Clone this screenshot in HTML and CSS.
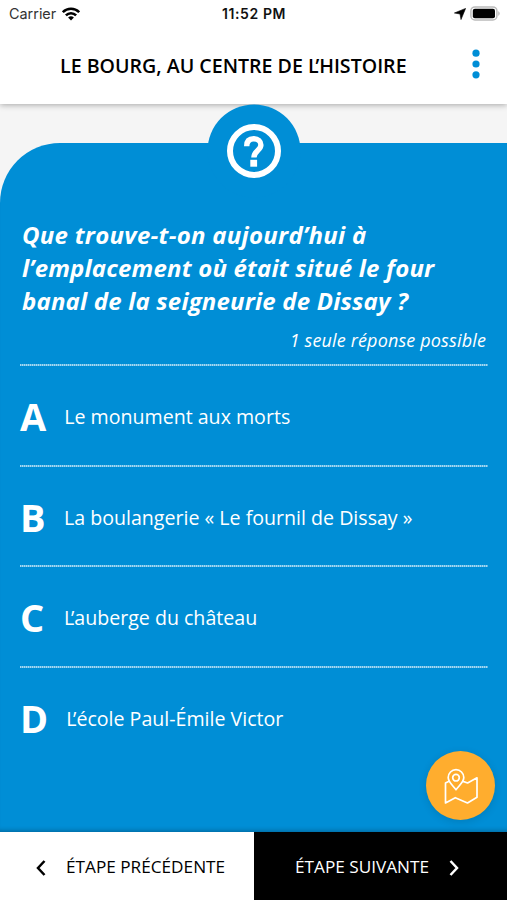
FILE: index.html
```html
<!DOCTYPE html>
<html lang="fr">
<head>
<meta charset="utf-8">
<title>Le Bourg, au centre de l’histoire</title>
<link rel="stylesheet" href="styles.css">
</head>
<body>
<div class="app">
  <header class="header">
    <div class="status">
      <div class="status-left"><span class="carrier">Carrier</span>
        <svg class="wifi" width="18" height="14" viewBox="0 0 18 14"><g fill="none" stroke="#000" stroke-width="2.6"><path d="M.8 5.200a11.600 11.600 0 0 1 16.400 0"/><path d="M3.900 8.400a7.200 7.200 0 0 1 10.200 0"/></g><path d="M9 13.600l-2.900-3a4.100 4.100 0 0 1 5.800 0z"/></svg>
      </div>
      <span class="clock">11:52 PM</span>
      <div class="status-right">
        <svg width="12" height="12" viewBox="0 0 12 12"><path d="M11.600.4L7 11.600 6 6 .4 5z" stroke="#000" stroke-width=".6"/></svg>
        <svg width="31" height="15" viewBox="0 0 31 15"><rect x=".9" y=".9" width="26" height="13" rx="4" fill="#fff" stroke="#bbb" stroke-width="1.5"/><rect x="2.800" y="2.800" width="22.200" height="9.400" rx="2"/><path d="M28.400 5v5q2.400-2.500 0-5z" fill="#aaa"/></svg>
      </div>
    </div>
    <div class="titlebar">
      <h1 class="title">LE BOURG, AU CENTRE DE <span class="kern">L</span>’HISTOIRE</h1>
      <svg class="menu" width="8" height="30" viewBox="0 0 8 30"><circle cx="4" cy="4.200" r="3.600"/><circle cx="4" cy="15" r="3.600"/><circle cx="4" cy="25.800" r="3.600"/></svg>
    </div>
  </header>
  <main class="stage">
    <section class="quiz">
      <div class="badge">
        <svg width="94" height="94" viewBox="0 0 94 94"><circle cx="47" cy="47" r="46.500" fill="#008ed6"/><circle cx="47" cy="47" r="24" fill="none" stroke="#fff" stroke-width="6"/><path d="M39.700 42.200c0-5 2.600-7.400 7-7.400s7.200 2.600 7.200 6.300c0 5.200-7 5.800-7 12.400" fill="none" stroke="#fff" stroke-width="5.400"/><path d="M43.300 55.800h6.800v6.900h-6.800z" fill="#fff"/></svg>
      </div>
      <h2 class="question"><span class="wide">Que trouve-t-on aujourd’hui à</span><br>l’emplacement où était situé le four<br>banal de la seigneurie de Dissay ?</h2>
      <p class="hint">1 seule réponse possible</p>
      <ul class="answers">
        <li class="answer"><b class="letter">A</b><span class="label">Le monument aux morts</span></li>
        <li class="answer"><b class="letter">B</b><span class="label">La boulangerie « Le fournil de Dissay »</span></li>
        <li class="answer"><b class="letter">C</b><span class="label"><span class="kern">L</span>’auberge du château</span></li>
        <li class="answer"><b class="letter">D</b><span class="label"><span class="kern">L</span>’école Paul-Émile Victor</span></li>
      </ul>
    </section>
    <div class="fab">
      <svg width="36" height="36" viewBox="0 0 36 36" fill="none" stroke="#fff" stroke-width="1.700" stroke-linejoin="round" stroke-linecap="round"><path d="M5.500 13.500L2.500 15v20l9.800-5.300L24.500 35l9.500-5.800V9.800l-9.400 5.200-4.600-1.600"/><path d="M13 21.700C9.500 17 5.200 14 5.200 9.500a7.800 7.800 0 0 1 15.600 0c0 4.500-4.300 7.500-7.800 12.200z"/><circle cx="13" cy="9.700" r="3.300"/></svg>
    </div>
  </main>
  <footer class="footer">
    <div class="nav prev"><svg width="10" height="16" viewBox="0 0 10 16"><path d="M8.500 1L2 8l6.500 7"/></svg><span>ÉTAPE PRÉCÉDENTE</span></div>
    <div class="nav next"><span>ÉTAPE SUIVANTE</span><svg width="10" height="16" viewBox="0 0 10 16"><path d="M1.500 1L8 8l-6.500 7"/></svg></div>
  </footer>
</div>
</body>
</html>
```
FILE: styles.css
```css
* { box-sizing: border-box; }
body { margin: 0; font-family: "Open Sans", sans-serif; background: #f5f5f5; }
.app { width: 507px; height: 900px; display: flex; flex-direction: column; overflow: hidden; }
.header { height: 104px; flex: none; background: #fff; box-shadow: 0 1px 6px rgba(0,0,0,.32); display: flex; flex-direction: column; }
.status { height: 27px; display: grid; grid-template-columns: 1fr auto 1fr; align-items: center; padding: 0 6px 0 9px; font-family: Inter, sans-serif; font-size: 14px; color: #111; }
.status-left, .status-right { display: flex; align-items: center; gap: 6px; }
.status-right { justify-content: flex-end; gap: 4px; }
.carrier { color: #333; font-size: 14.400px; }
.clock { font-weight: 600; letter-spacing: .6px; margin-right: 2px; }
.titlebar { flex: 1; display: flex; align-items: flex-start; padding-left: 60px; }
.title { margin: 25px 0 0; width: 412px; font-size: 19.600px; line-height: 28px; font-weight: 600; white-space: nowrap; color: #000; }
.kern { letter-spacing: -3.300px; }
.menu { margin-top: 22px; fill: #008ed6; }
.stage { flex: 1; position: relative; padding-top: 39px; }
.quiz { height: 100%; background: #008ed6; border-top-left-radius: 60px; padding: 75px 19px 0 20px; color: #fff; position: relative; box-shadow: inset 0 -5px 5px -4px rgba(0,0,0,.3); }
.badge { position: absolute; top: -39px; left: 207px; height: 94px; }
.question { margin: 0 0 0 2px; font-size: 24px; letter-spacing: .18px; line-height: 33px; font-weight: 700; font-style: italic; white-space: nowrap; }
.wide { letter-spacing: .28px; }
.hint { margin: 9px 2px 0 0; height: 30px; line-height: 29px; text-align: right; font-size: 18px; letter-spacing: .15px; font-style: italic; }
.answers { list-style: none; margin: 8px 0 0; padding: 0; }
.answer { height: 100.700px; background: repeating-linear-gradient(90deg, rgba(255,255,255,.65) 0 1px, rgba(255,255,255,.35) 1px 2px) top / 100% 2px no-repeat; display: flex; align-items: center; padding-top: 3px; }
.letter { font-size: 38px; line-height: 50px; min-width: 26px; }
.label { font-size: 19.600px; line-height: 28px; margin: 2px 0 0 18px; white-space: nowrap; }
.fab { position: absolute; left: 426px; top: 647px; width: 69px; height: 69px; border-radius: 50%; background: #ffad2e; box-shadow: 0 2px 8px rgba(0,0,0,.12); display: flex; align-items: center; justify-content: center; }
.footer { height: 68px; flex: none; display: flex; }
.nav { flex: 1 1 0; min-width: 0; display: flex; align-items: center; font-size: 17.200px; white-space: nowrap; }
.nav svg { flex: none; fill: none; stroke: currentColor; stroke-width: 2.500; margin-top: 3px; }
.prev { flex: 0 0 254px; background: #fff; color: #000; padding-left: 36px; gap: 20px; }
.next { background: #000; color: #fff; padding-left: 41px; gap: 20px; }
```
